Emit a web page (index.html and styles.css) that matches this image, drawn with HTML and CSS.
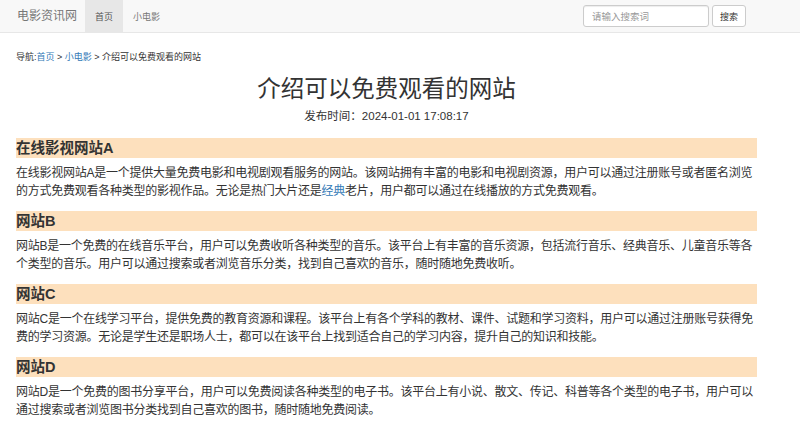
FILE: index.html
```html
<!DOCTYPE html>
<html lang="zh-CN">
<head>
<meta charset="utf-8">
<title>介绍可以免费观看的网站</title>
<link rel="stylesheet" href="styles.css">
</head>
<body>
<header class="navbar">
  <a class="brand" href="#">电影资讯网</a>
  <nav class="nav">
    <a class="nav-item active" href="#">首页</a>
    <a class="nav-item" href="#">小电影</a>
  </nav>
  <form class="search">
    <input class="search-input" type="text" placeholder="请输入搜索词">
    <button class="search-btn" type="button">搜索</button>
  </form>
</header>
<main class="container">
  <div class="crumb">导航:<a href="#">首页</a> &gt; <a href="#">小电影</a> &gt; 介绍可以免费观看的网站</div>
  <h1 class="title">介绍可以免费观看的网站</h1>
  <div class="date">发布时间：2024-01-01 17:08:17</div>
  <section class="sec">
    <h2 class="sec-title">在线影视网站A</h2>
    <p class="sec-text">在线影视网站A是一个提供大量免费电影和电视剧观看服务的网站。该网站拥有丰富的电影和电视剧资源，用户可以通过注册账号或者匿名浏览的方式免费观看各种类型的影视作品。无论是热门大片还是<a href="#">经典</a>老片，用户都可以通过在线播放的方式免费观看。</p>
  </section>
  <section class="sec">
    <h2 class="sec-title">网站B</h2>
    <p class="sec-text">网站B是一个免费的在线音乐平台，用户可以免费收听各种类型的音乐。该平台上有丰富的音乐资源，包括流行音乐、经典音乐、儿童音乐等各个类型的音乐。用户可以通过搜索或者浏览音乐分类，找到自己喜欢的音乐，随时随地免费收听。</p>
  </section>
  <section class="sec">
    <h2 class="sec-title">网站C</h2>
    <p class="sec-text">网站C是一个在线学习平台，提供免费的教育资源和课程。该平台上有各个学科的教材、课件、试题和学习资料，用户可以通过注册账号获得免费的学习资源。无论是学生还是职场人士，都可以在该平台上找到适合自己的学习内容，提升自己的知识和技能。</p>
  </section>
  <section class="sec">
    <h2 class="sec-title">网站D</h2>
    <p class="sec-text">网站D是一个免费的图书分享平台，用户可以免费阅读各种类型的电子书。该平台上有小说、散文、传记、科普等各个类型的电子书，用户可以通过搜索或者浏览图书分类找到自己喜欢的图书，随时随地免费阅读。</p>
  </section>
</main>
</body>
</html>
```

FILE: styles.css
```css
* { box-sizing: border-box; }
html, body { margin: 0; padding: 0; }
body {
  font-family: "Liberation Sans", "Noto Sans CJK SC", sans-serif;
  color: #333;
  background: #fff;
}
a { text-decoration: none; color: #337ab7; }

.navbar {
  display: flex;
  align-items: center;
  height: 33px;
  background: #f8f8f8;
  border-bottom: 1px solid #e7e7e7;
}
.brand {
  margin-left: 17px;
  margin-right: 8px;
  font-size: 12px;
  line-height: 32px;
  color: #777;
}
.nav { display: flex; align-self: stretch; }
.nav-item {
  display: flex;
  align-items: center;
  padding: 0 10px;
  font-size: 9px;
  color: #777;
}
.nav-item.active { background: #e7e7e7; color: #555; }
.search {
  display: flex;
  margin: 0 54px 0 auto;
  gap: 3px;
}
.search-input {
  width: 126px;
  height: 22px;
  border: 1px solid #ccc;
  border-radius: 3px;
  padding: 0 8px;
  font-family: inherit;
  font-size: 9.5px;
  color: #555;
  background: #fff;
  box-shadow: inset 0 1px 1px rgba(0,0,0,.075);
}
.search-input::placeholder { color: #999; }
.search-btn {
  width: 34px;
  height: 22px;
  border: 1px solid #ccc;
  border-radius: 3px;
  background: #fff;
  font-family: inherit;
  font-size: 9px;
  color: #333;
  padding: 0;
}

.container {
  width: 741px;
  margin-left: 16px;
  padding-top: 17px;
}
.crumb {
  font-size: 9px;
  line-height: 14px;
  color: #333;
}
.title {
  margin: 10px 0 0;
  text-align: center;
  font-size: 23.5px;
  line-height: 30px;
  font-weight: normal;
  color: #333;
}
.date {
  margin-top: 4px;
  text-align: center;
  font-size: 11.5px;
  line-height: 16px;
  color: #333;
}
.sec:first-of-type { margin-top: 14px; }
.sec-title {
  margin: 0;
  height: 20px;
  line-height: 20px;
  font-size: 14.5px;
  font-weight: bold;
  background: #fde0bd;
  color: #333;
}
.sec-text {
  margin: 6px 0 11px;
  font-size: 12px;
  letter-spacing: -0.25px;
  line-height: 18px;
  color: #333;
}
```
